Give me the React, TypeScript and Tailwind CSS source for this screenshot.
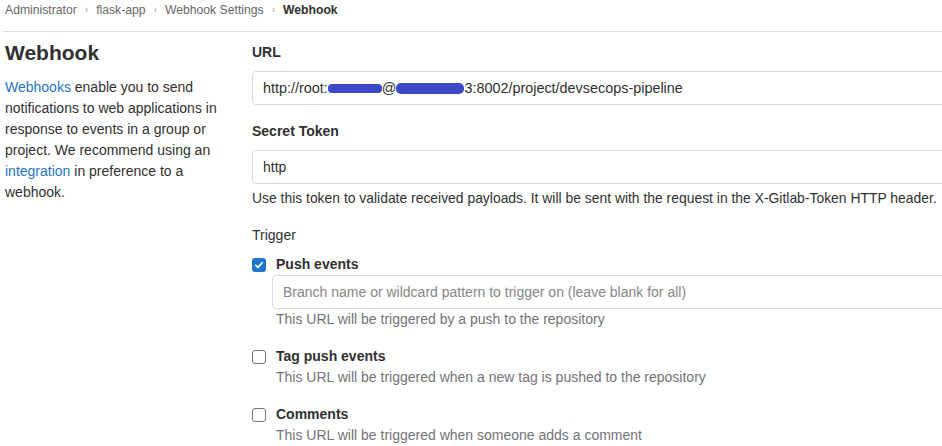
import React from 'react';

const Check: React.FC<{ checked?: boolean }> = ({ checked }) =>
  checked ? (
    <span className="flex h-[14px] w-[14px] shrink-0 items-center justify-center rounded-[3px] bg-[#1f75cb]">
      <svg viewBox="0 0 12 12" className="h-[10px] w-[10px]">
        <path d="M2.2 6.3 L4.8 8.8 L9.8 3.2" fill="none" stroke="#fff" strokeWidth="2" strokeLinecap="round" strokeLinejoin="round" />
      </svg>
    </span>
  ) : (
    <span className="h-[14px] w-[14px] shrink-0 rounded-[3px] border border-[#737278] bg-white" />
  );

const Trigger: React.FC<{ label: string; help: string; checked?: boolean; children?: React.ReactNode }> = ({ label, help, checked, children }) => (
  <div className="mb-[16px]">
    <div className="flex h-[21px] items-center gap-[10px]">
      <Check checked={checked} />
      <span className="font-bold text-[#303030]">{label}</span>
    </div>
    <div className="pl-[20px]">
      {children}
      <p className="pl-[4px] text-[#737278]">{help}</p>
    </div>
  </div>
);

const App: React.FC = () => {
  return (
    <div className="h-[446px] w-[942px] overflow-hidden bg-white text-[14px] leading-[21px] text-[#303030] [font-family:'Liberation_Sans',Arial,sans-serif]">
      {/* breadcrumb */}
      <div className="ml-[3px] flex h-[32px] items-start border-b border-[#dcdcde] pl-[2px] text-[12.2px] leading-[20px] text-[#666]">
        <span>Administrator</span>
        <span className="mx-[8px] text-[10px] text-[#999]">›</span>
        <span>flask-app</span>
        <span className="mx-[8px] text-[10px] text-[#999]">›</span>
        <span>Webhook Settings</span>
        <span className="mx-[8px] text-[10px] text-[#999]">›</span>
        <span className="font-bold text-[#303030]">Webhook</span>
      </div>

      <div className="flex">
        {/* left column */}
        <div className="w-[252px] shrink-0 pl-[5px] pr-[20px] pt-[7px]">
          <h2 className="mb-[10px] text-[21px] font-semibold leading-[28px] text-[#303030]">Webhook</h2>
          <p>
            <span className="text-[#1f75cb]">Webhooks</span> enable you to send notifications to web applications in response to events in a group or project. We recommend using an{' '}
            <span className="text-[#1f75cb]">integration</span> in preference to a webhook.
          </p>
        </div>

        {/* right column */}
        <div className="w-[720px] shrink-0 pt-[10px]">
          <label className="mb-[8px] block font-semibold">URL</label>
          <div className="flex h-[34px] items-center rounded-[4px] border border-[#dbdbdb] px-[10px] text-[14.4px]">
            <span>http://root:</span>
            <span className="inline-block h-[9px] w-[54px] rounded-[4px] bg-[#3d48c9]" />
            <span>@</span>
            <span className="inline-block h-[11px] w-[68px] rounded-[5px] bg-[#3d48c9]" />
            <span>3:8002/project/devsecops-pipeline</span>
          </div>

          <label className="mb-[8px] mt-[16px] block font-semibold">Secret Token</label>
          <div className="flex h-[34px] items-center rounded-[4px] border border-[#dbdbdb] px-[10px]">http</div>
          <p className="mt-[4px] text-[13.9px]">Use this token to validate received payloads. It will be sent with the request in the X-Gitlab-Token HTTP header.</p>

          <label className="mb-[8px] mt-[16px] block">Trigger</label>
          <Trigger label="Push events" help="This URL will be triggered by a push to the repository" checked>
            <div className="flex h-[34px] items-center rounded-[4px] border border-[#dbdbdb] px-[10px] text-[#868686]">
              Branch name or wildcard pattern to trigger on (leave blank for all)
            </div>
          </Trigger>
          <Trigger label="Tag push events" help="This URL will be triggered when a new tag is pushed to the repository" />
          <Trigger label="Comments" help="This URL will be triggered when someone adds a comment" />
        </div>
      </div>
    </div>
  );
};

export default App;
